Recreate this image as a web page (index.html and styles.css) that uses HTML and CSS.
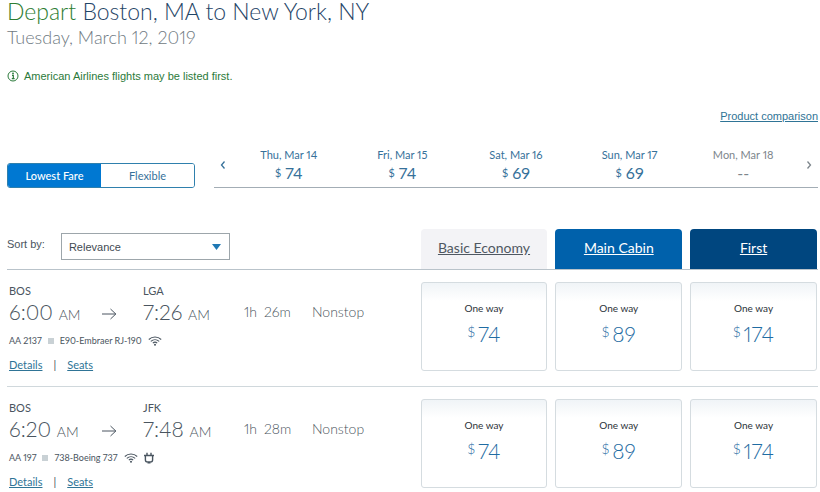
FILE: index.html
```
<!DOCTYPE html>
<html lang="en">
<head>
  <meta charset="UTF-8" />
  <meta name="viewport" content="width=device-width, initial-scale=1.0"/>
  <title>Choose flights</title>
  <link rel="stylesheet" href="styles.css">
</head>
<body>
  <!-- Shared icons -->
  <svg class="icon-defs" aria-hidden="true">
    <symbol id="arrow" viewBox="0 0 16 12">
      <path d="M1 6h14M9.500 1l5.300 5-5.300 5" fill="none" stroke="currentColor" stroke-width="1"/>
    </symbol>
    <symbol id="wifi" viewBox="0 0 14 10">
      <path d="M.8 3.500C4.300.2 9.700.2 13.200 3.500M2.800 5.400c2.400-2.200 6-2.200 8.400 0M4.800 7.200c1.300-1.200 3.100-1.200 4.400 0" fill="none" stroke="currentColor" stroke-width="1.100"/>
      <circle cx="7" cy="8.800" r="1" fill="currentColor"/>
    </symbol>
    <symbol id="power" viewBox="0 0 10 12">
      <path d="M0 3.500h10M3 .8v2.700M7 .8v2.700M1.400 3.500v4.200c0 1.300.8 2.200 2 2.200h3.200c1.200 0 2-.9 2-2.200V3.500M3.500 10.700h3" fill="none" stroke="currentColor" stroke-width="1.400"/>
    </symbol>
  </svg>

  <main class="page">
    <h1 class="route"><span class="depart">Depart</span> Boston, MA to New York, NY</h1>
    <h2 class="date">Tuesday, March 12, 2019</h2>

    <p class="notice">
      <svg class="info-icon" viewBox="0 0 12 12" aria-hidden="true">
        <circle cx="6" cy="6" r="5" fill="none" stroke="currentColor" stroke-width="1"/>
        <path d="M5 5.300h1.300v3.400M4.800 8.700h2.800" fill="none" stroke="currentColor" stroke-width="1.200"/>
        <circle cx="6" cy="3.400" r=".9" fill="currentColor"/>
      </svg>
      American Airlines flights may be listed first.
    </p>

    <div class="compare"><a href="#">Product comparison</a></div>

    <!-- Fare type and dates -->
    <div class="options">
      <div class="fare-toggle">
        <button class="toggle-button active" type="button">Lowest Fare</button>
        <button class="toggle-button" type="button">Flexible</button>
      </div>
      <div class="calendar">
        <button class="arrow-button" type="button" aria-label="Earlier dates">
          <svg viewBox="0 0 6 10"><path d="M4.500 1.500L1.500 5l3 3.500" fill="none" stroke="currentColor" stroke-width="1.300"/></svg>
        </button>
        <a class="day" href="#"><span>Thu, Mar 14</span><span class="day-price"><small>$</small> 74</span></a>
        <a class="day" href="#"><span>Fri, Mar 15</span><span class="day-price"><small>$</small> 74</span></a>
        <a class="day" href="#"><span>Sat, Mar 16</span><span class="day-price"><small>$</small> 69</span></a>
        <a class="day" href="#"><span>Sun, Mar 17</span><span class="day-price"><small>$</small> 69</span></a>
        <div class="day disabled"><span>Mon, Mar 18</span><span class="day-price">--</span></div>
        <button class="arrow-button disabled" type="button" aria-label="Later dates">
          <svg viewBox="0 0 6 10"><path d="M1.500 1.500l3 3.500-3 3.500" fill="none" stroke="currentColor" stroke-width="1.300"/></svg>
        </button>
      </div>
    </div>

    <!-- Sort and cabins -->
    <div class="results-header">
      <div class="sort">
        <label for="sort">Sort by:</label>
        <select id="sort">
          <option>Relevance</option>
          <option>Price</option>
          <option>Duration</option>
        </select>
      </div>
      <div class="fares">
        <a class="cabin basic" href="#">Basic Economy</a>
        <a class="cabin main-cabin" href="#">Main Cabin</a>
        <a class="cabin first" href="#">First</a>
      </div>
    </div>

    <!-- Flights -->
    <section class="flight">
      <div class="flight-info">
        <div class="times">
          <div class="stop">
            <div class="airport">BOS</div>
            <div class="time">6:00 <span>AM</span></div>
          </div>
          <svg class="arrow"><use href="#arrow"/></svg>
          <div class="stop">
            <div class="airport">LGA</div>
            <div class="time">7:26 <span>AM</span></div>
          </div>
          <div class="duration"><span>1h</span><span>26m</span></div>
          <div class="stops">Nonstop</div>
        </div>
        <div class="aircraft">
          <span>AA 2137</span>
          <span class="square"></span>
          <span>E90-Embraer RJ-190</span>
          <svg class="wifi"><use href="#wifi"/></svg>
        </div>
        <div class="links"><a href="#">Details</a><span>|</span><a href="#">Seats</a></div>
      </div>
      <div class="fares">
        <button class="fare" type="button"><span>One way</span><span class="price"><small>$</small>74</span></button>
        <button class="fare" type="button"><span>One way</span><span class="price"><small>$</small>89</span></button>
        <button class="fare" type="button"><span>One way</span><span class="price"><small>$</small>174</span></button>
      </div>
    </section>

    <section class="flight">
      <div class="flight-info">
        <div class="times">
          <div class="stop">
            <div class="airport">BOS</div>
            <div class="time">6:20 <span>AM</span></div>
          </div>
          <svg class="arrow"><use href="#arrow"/></svg>
          <div class="stop">
            <div class="airport">JFK</div>
            <div class="time">7:48 <span>AM</span></div>
          </div>
          <div class="duration"><span>1h</span><span>28m</span></div>
          <div class="stops">Nonstop</div>
        </div>
        <div class="aircraft">
          <span>AA 197</span>
          <span class="square"></span>
          <span>738-Boeing 737</span>
          <svg class="wifi"><use href="#wifi"/></svg>
          <svg class="power"><use href="#power"/></svg>
        </div>
        <div class="links"><a href="#">Details</a><span>|</span><a href="#">Seats</a></div>
      </div>
      <div class="fares">
        <button class="fare" type="button"><span>One way</span><span class="price"><small>$</small>74</span></button>
        <button class="fare" type="button"><span>One way</span><span class="price"><small>$</small>89</span></button>
        <button class="fare" type="button"><span>One way</span><span class="price"><small>$</small>174</span></button>
      </div>
    </section>
  </main>
</body>
</html>
```
FILE: styles.css
```
* {
  box-sizing: border-box;
}

body {
  margin: 0;
  font-family: Lato, "Noto Sans", sans-serif;
  font-variant-numeric: proportional-nums;
  color: #4a5560;
  background-color: #fff;
}

button {
  font-family: inherit;
  font-variant-numeric: inherit;
  cursor: pointer;
}

a {
  color: #2f7496;
}

.icon-defs {
  display: none;
}

.page {
  padding: 0 2px 0 7px;
}

/* Heading */
.route {
  margin: 0;
  font-size: 23px;
  font-weight: 300;
  line-height: 22px;
  color: #1f4567;
}

.depart {
  color: #2d7d32;
}

.date {
  margin: 3px 0 0;
  font-size: 18px;
  font-weight: 300;
  line-height: 24px;
  color: #6f7a82;
}

.notice {
  display: flex;
  align-items: center;
  gap: 5px;
  margin: 19px 0 0;
  font-family: "Liberation Sans", Arial, sans-serif;
  font-size: 11px;
  line-height: 16px;
  color: #2b7a3a;
}

.info-icon {
  width: 12px;
  height: 12px;
}

.compare {
  margin-top: 24px;
  font-family: "Liberation Sans", Arial, sans-serif;
  font-size: 11px;
  line-height: 16px;
  text-align: right;
}

/* Fare type and dates */
.options {
  display: flex;
  align-items: flex-end;
  gap: 19px;
  margin-top: 23px;
}

.fare-toggle {
  display: flex;
  width: 188px;
  height: 25px;
  border: 1px solid #2f80ad;
  border-radius: 3px;
  overflow: hidden;
}

.toggle-button {
  flex: 1;
  padding: 0;
  border: 0;
  background-color: #fff;
  font-size: 11px;
  color: #36719a;
}

.toggle-button.active {
  background-color: #0078d2;
  font-weight: 500;
  color: #fff;
}

.calendar {
  flex: 1;
  display: flex;
  align-items: center;
  height: 41px;
  padding-bottom: 5px;
  border-bottom: 1px solid #a3adb5;
}

.arrow-button {
  width: 18px;
  padding: 0 6px;
  border: 0;
  background: none;
  line-height: 0;
  color: #36719a;
}

.arrow-button svg {
  width: 6px;
  height: 10px;
}

.day {
  flex: 1;
  display: flex;
  flex-direction: column;
  text-align: center;
  text-decoration: none;
  font-size: 11px;
  line-height: 16px;
  color: #36719a;
}

.day-price {
  font-size: 16px;
  line-height: 20px;
}

.day-price small {
  font-size: 11px;
  vertical-align: 2px;
}

.day.disabled,
.arrow-button.disabled {
  color: #7d868c;
}

/* Sort and cabins */
.results-header {
  display: grid;
  grid-template-columns: 51fr 49fr;
  align-items: end;
  margin-top: 41px;
  border-bottom: 1px solid #b9c3ca;
}

.sort {
  display: flex;
  align-items: center;
  gap: 16px;
  padding-bottom: 9px;
  font-family: "Liberation Sans", Arial, sans-serif;
  font-size: 11px;
}

.sort label {
  padding-bottom: 6px;
}

.sort select {
  appearance: none;
  width: 169px;
  height: 27px;
  padding: 0 7px;
  border: 1px solid #9da6ab;
  border-radius: 0;
  background: #fff url("data:image/svg+xml,%3Csvg xmlns='http://www.w3.org/2000/svg' width='9' height='6'%3E%3Cpath d='M0 0h9L4.500 6z' fill='%231f78b4'/%3E%3C/svg%3E") no-repeat right 8px center;
  font-family: inherit;
  font-size: 11px;
  color: #3f4a52;
}

.fares {
  display: grid;
  grid-template-columns: repeat(3, 1fr);
  gap: 8px;
  padding-right: 1px;
}

.cabin {
  height: 40px;
  border-radius: 4px 4px 0 0;
  font-size: 14px;
  line-height: 38px;
  text-align: center;
  color: #fff;
}

.basic {
  background-color: #f3f3f6;
  color: #4f5862;
}

.main-cabin {
  background-color: #0061ab;
}

.first {
  background-color: #00467f;
}

/* Flights */
.flight {
  display: grid;
  grid-template-columns: 51fr 49fr;
  padding: 12px 0 13px;
  border-bottom: 1px solid #d0d8dc;
}

.flight:last-child {
  padding-bottom: 0;
  border-bottom: 0;
}

.flight-info {
  padding: 1px 0 0 2px;
}

.times {
  display: grid;
  grid-template-columns: 92px 42px 101px 68px 1fr;
  align-items: end;
  font-size: 14px;
  font-weight: 300;
  line-height: 26px;
}

.airport {
  font-size: 11px;
  font-weight: 400;
  line-height: 16px;
}

.time {
  height: 26px;
  font-size: 21px;
}

.time span {
  font-size: 14px;
}

.arrow {
  width: 16px;
  height: 12px;
  margin-bottom: 5px;
}

.duration {
  display: flex;
  gap: 7px;
}

.aircraft {
  display: flex;
  align-items: center;
  gap: 6px;
  margin-top: 8px;
  font-size: 9px;
  line-height: 16px;
}

.square {
  width: 6px;
  height: 6px;
  background-color: #c9d1d5;
}

.wifi {
  width: 14px;
  height: 10px;
}

.power {
  width: 10px;
  height: 12px;
}

.links {
  display: flex;
  gap: 11px;
  margin-top: 8px;
  font-size: 11px;
  line-height: 16px;
}

.fare {
  display: flex;
  flex-direction: column;
  align-items: center;
  height: 89px;
  padding: 17px 0 0;
  border: 1px solid #d5dce0;
  border-radius: 3px;
  background: linear-gradient(#f0f4f7, #fff 18px);
  font-size: 10px;
  line-height: 16px;
  color: #2b3238;
}

.price {
  display: flex;
  gap: 3px;
  margin-top: 4px;
  font-size: 21px;
  font-weight: 300;
  line-height: 28px;
  color: #1f6ca3;
}

.price small {
  font-size: 14px;
  line-height: 24px;
}
```
